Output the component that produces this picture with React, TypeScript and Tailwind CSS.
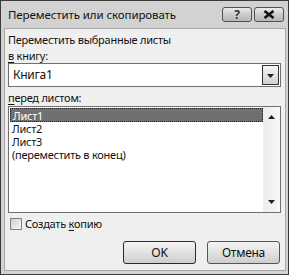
const font = { fontFamily: '"Noto Sans", "Open Sans", sans-serif' }

function TitleButton({ children }: { children: React.ReactNode }) {
  return (
    <div className="flex h-[15px] w-[30px] items-center justify-center rounded-[3px] border border-[#505050] bg-gradient-to-b from-[#ececec] via-[#cbcbcb] to-[#b8b8b8]">
      {children}
    </div>
  )
}

function Arrow({ up }: { up?: boolean }) {
  return (
    <svg width="7" height="4" viewBox="0 0 7 4">
      <path d={up ? 'M0 4 L3.5 0 L7 4 Z' : 'M0 0 L7 0 L3.5 4 Z'} fill="#222" />
    </svg>
  )
}

export default function App() {
  const items = ['Лист1', 'Лист2', 'Лист3', '(переместить в конец)']
  return (
    <div
      className="flex h-[275px] w-[289px] flex-col border border-[#3a3a3a] bg-[#d2d2d2] text-[11px] tracking-[-0.25px] text-[#111]"
      style={font}
    >
      <div className="flex h-[27px] shrink-0 justify-between pl-[7px] pr-[4px]">
        <span className="pt-[6px] text-[11.5px] leading-[16px] tracking-[-0.1px]">Переместить или скопировать</span>
        <div className="mt-[6px] flex gap-[2px]">
          <TitleButton>
            <span className="text-[12px] font-bold leading-none text-[#333]">?</span>
          </TitleButton>
          <TitleButton>
            <svg width="12" height="9" viewBox="0 0 12 9">
              <path d="M1.5 1 L10.5 8 M10.5 1 L1.5 8" stroke="#111" strokeWidth="2.6" />
            </svg>
          </TitleButton>
        </div>
      </div>
      <div className="mb-[3px] ml-[3px] mr-[2px] flex flex-1 flex-col border border-[#a8a8a8] bg-[#efefef] pl-[3px] pr-[4px] pt-[4px]">
        <div className="leading-[14px]">Переместить выбранные листы</div>
        <div className="mt-[2px] leading-[14px]">
          <span className="underline underline-offset-2">в</span> книгу:
        </div>
        <div className="flex h-[24px] items-center border border-[#707070] bg-white pl-[4px] pr-[1px]">
          <span className="flex-1 text-[12px]">Книга1</span>
          <div className="flex h-[20px] w-[17px] items-start justify-center border border-[#333] bg-gradient-to-b from-[#f6f6f6] to-[#d0d0d0] pt-[8px]">
            <Arrow />
          </div>
        </div>
        <div className="mt-[4px] leading-[14px]">
          <span className="underline underline-offset-2">п</span>еред листом:
        </div>
        <div className="mt-[1px] flex h-[107px] border border-[#707070] bg-white">
          <div className="flex-1 pl-[1px] pt-[1px]">
            {items.map((t, i) => (
              <div
                key={t}
                className={
                  'pl-[2px] leading-[13px] ' +
                  (i === 0 ? 'h-[14px] border border-dotted border-[#222] bg-[#707070] pl-[1px] text-white' : 'h-[13px]')
                }
              >
                {t}
              </div>
            ))}
          </div>
          <div className="flex w-[17px] flex-col items-center justify-between bg-gradient-to-r from-[#ececec] to-[#f8f8f8] pb-[8px] pt-[8px]">
            <Arrow up />
            <Arrow />
          </div>
        </div>
        <div className="ml-[2px] mt-[4px] flex h-[14px] items-center gap-[3px]">
          <div className="h-[12px] w-[12px] border border-[#808080] bg-gradient-to-br from-[#cfcfcf] to-[#f6f6f6]" />
          <span className="leading-[14px]">
            Создать <span className="underline underline-offset-2">к</span>опию
          </span>
        </div>
        <div className="mr-[1px] mt-[10px] flex justify-end gap-[11px]">
          <div className="flex h-[23px] w-[73px] items-center justify-center rounded-[3px] border border-[#2a2a2a] bg-gradient-to-b from-[#f4f4f4] via-[#e2e2e2] to-[#cdcdcd] text-[12px]">
            OK
          </div>
          <div className="flex h-[23px] w-[73px] items-center justify-center rounded-[3px] border border-[#555] bg-gradient-to-b from-[#f4f4f4] via-[#e2e2e2] to-[#cdcdcd] text-[12px]">
            Отмена
          </div>
        </div>
      </div>
    </div>
  )
}
